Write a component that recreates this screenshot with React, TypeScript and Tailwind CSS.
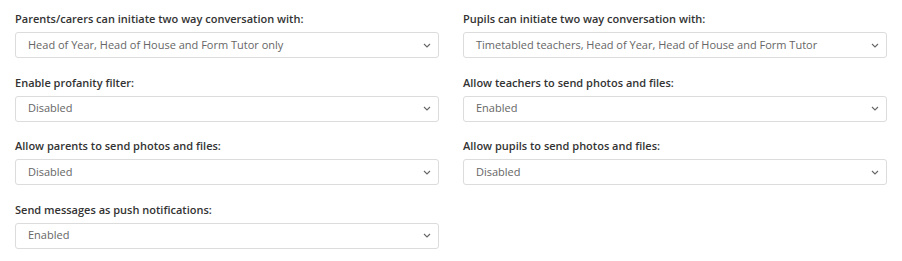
const rows: { label: string; value: string }[][] = [
  [
    { label: "Parents/carers can initiate two way conversation with:", value: "Head of Year, Head of House and Form Tutor only" },
    { label: "Pupils can initiate two way conversation with:", value: "Timetabled teachers, Head of Year, Head of House and Form Tutor" },
  ],
  [
    { label: "Enable profanity filter:", value: "Disabled" },
    { label: "Allow teachers to send photos and files:", value: "Enabled" },
  ],
  [
    { label: "Allow parents to send photos and files:", value: "Disabled" },
    { label: "Allow pupils to send photos and files:", value: "Disabled" },
  ],
  [{ label: "Send messages as push notifications:", value: "Enabled" }],
];

const Field = ({ label, value }: { label: string; value: string }) => (
  <div className="flex flex-col">
    <div className="h-[18px] text-[11px] leading-[18px] font-semibold text-[#333] whitespace-nowrap">{label}</div>
    <div className="mt-[4px] h-[26px] flex items-center justify-between border border-[#dcdcdc] rounded-[3px] bg-white pl-[12px] pr-[7px]">
      <span className="text-[11px] text-[#666] whitespace-nowrap">{value}</span>
      <svg width="8" height="5" viewBox="0 0 8 5" fill="none">
        <path d="M1 1 L4 4 L7 1" stroke="#666" strokeWidth="1.1" />
      </svg>
    </div>
  </div>
);

export default function App() {
  return (
    <div className="w-[902px] h-[261px] bg-white pl-[15px] pt-[10px] font-['Open_Sans',sans-serif]">
      <div className="grid grid-cols-[424px_424px] gap-x-[24px] gap-y-[15.5px]">
        {rows.flat().map((f) => (
          <Field key={f.label} {...f} />
        ))}
      </div>
    </div>
  );
}
